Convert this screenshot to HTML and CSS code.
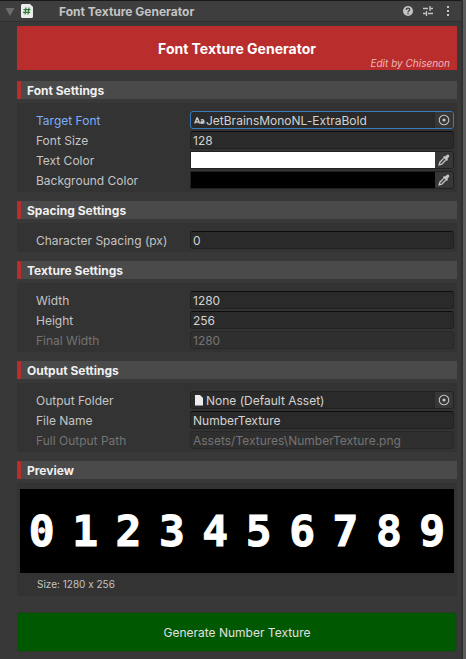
FILE: index.html
```html
<!DOCTYPE html>
<html lang="en">
<head>
<meta charset="utf-8">
<meta name="viewport" content="width=device-width, initial-scale=1">
<title>Font Texture Generator</title>
<link rel="stylesheet" href="styles.css">
</head>
<body>
<svg class="symbols" aria-hidden="true">
  <symbol id="picker" viewBox="0 0 12 12"><circle cx="6" cy="6" r="4.8" fill="none" stroke="#c4c4c4" stroke-width="1.1"/><circle cx="6" cy="6" r="1.6" fill="#c4c4c4"/></symbol>
  <symbol id="dropper" viewBox="0 0 12 12"><path d="M7 2.500 8.700 1.100c.8-.8 1.700-.7 2.200-.1s.5 1.500-.2 2.200L9.500 4.800l.4 1.200L8.800 7.100 4.900 3.200 6 2.100z" fill="#c4c4c4"/><path d="M5.700 4.400 1.900 8.200l-.8 2.700 2.700-.8L7.600 6.300" fill="none" stroke="#c4c4c4" stroke-width="1.300"/></symbol>
</svg>
<main class="inspector">
  <header class="component">
    <button class="icon-button" type="button" aria-label="Collapse"><svg width="10" height="9" viewBox="0 0 10 9"><path d="M0.500 1h9L5 9z" fill="#6c6c6c"/></svg></button>
    <svg class="script-icon" width="12" height="14" viewBox="0 0 12 14"><path d="M1 0h8l3 3v10l-1 1H1l-1-1V1z" fill="#ececec"/><path d="M5 3.500 4 10.500M8 3.500 7 10.500M2.500 5.700h7M2 8.400h7" stroke="#2c7a32" stroke-width="1.200" fill="none"/></svg>
    <h1 class="component-name">Font Texture Generator</h1>
    <div class="tools">
      <button class="icon-button" type="button" aria-label="Help"><svg width="10" height="10" viewBox="0 0 10 10"><circle cx="5" cy="5" r="5" fill="#c4c4c4"/><path d="M3.300 3.900C3.300 1.600 6.700 1.700 6.700 3.700 6.700 4.900 5 4.800 5 6.300M5 7v1.300" fill="none" stroke="#3e3e3e" stroke-width="1.300"/></svg></button>
      <button class="icon-button" type="button" aria-label="Presets"><svg width="10" height="10" viewBox="0 0 10 10"><path d="M0 2.500h5M7 2.500h3M7 0v5M0 7.500h3M5 7.500h5M3.500 5v5" fill="none" stroke="#c4c4c4" stroke-width="1.300"/></svg></button>
      <button class="icon-button" type="button" aria-label="More"><svg width="10" height="10" viewBox="0 0 10 10"><path d="M4 0h2v2H4zM4 4h2v2H4zM4 8h2v2H4z" fill="#c4c4c4"/></svg></button>
    </div>
  </header>

  <div class="content">
    <div class="banner">
      <p class="banner-title">Font Texture Generator</p>
      <p class="banner-credit">Edit by Chisenon</p>
    </div>

    <section>
      <h2 class="heading">Font Settings</h2>
      <div class="panel">
        <div class="row active">
          <label for="font">Target Font</label>
          <div class="field object">
            <svg width="12" height="12" viewBox="0 0 12 12" fill="none" stroke="#c4c4c4" stroke-width="1.500"><path d="M.8 9.500 2.900 4h.6l2.100 5.500M1.700 8h3"/><path d="M6.900 6.200c.8-.7 2.900-.7 2.900.8v2.500M9.800 7.500c-3.500-.2-3.500 1.700-2 1.700 1 0 1.700-.4 2-.9"/></svg>
            <input id="font" type="text" value="JetBrainsMonoNL-ExtraBold" readonly>
            <button class="pick" type="button" aria-label="Select font"><svg width="12" height="12"><use href="#picker"/></svg></button>
          </div>
        </div>
        <div class="row">
          <label for="size">Font Size</label>
          <input class="field text" id="size" type="text" inputmode="numeric" value="128">
        </div>
        <div class="row">
          <label for="fg">Text Color</label>
          <div class="field color">
            <input id="fg" type="color" value="#ffffff">
            <button class="pick" type="button" aria-label="Sample text color"><svg width="12" height="12"><use href="#dropper"/></svg></button>
          </div>
        </div>
        <div class="row">
          <label for="bg">Background Color</label>
          <div class="field color">
            <input id="bg" type="color" value="#000000">
            <button class="pick" type="button" aria-label="Sample background color"><svg width="12" height="12"><use href="#dropper"/></svg></button>
          </div>
        </div>
      </div>
    </section>

    <section>
      <h2 class="heading">Spacing Settings</h2>
      <div class="panel">
        <div class="row">
          <label for="spacing">Character Spacing (px)</label>
          <input class="field text" id="spacing" type="text" inputmode="numeric" value="0">
        </div>
      </div>
    </section>

    <section>
      <h2 class="heading">Texture Settings</h2>
      <div class="panel">
        <div class="row">
          <label for="width">Width</label>
          <input class="field text" id="width" type="text" inputmode="numeric" value="1280">
        </div>
        <div class="row">
          <label for="height">Height</label>
          <input class="field text" id="height" type="text" inputmode="numeric" value="256">
        </div>
        <div class="row disabled">
          <label for="final">Final Width</label>
          <input class="field text" id="final" type="text" value="1280" disabled>
        </div>
      </div>
    </section>

    <section>
      <h2 class="heading">Output Settings</h2>
      <div class="panel">
        <div class="row">
          <label for="folder">Output Folder</label>
          <div class="field object">
            <svg width="12" height="12" viewBox="0 0 12 12"><path d="M1 1h5l3 3v7.500H1z" fill="#ececec"/></svg>
            <input id="folder" type="text" value="None (Default Asset)" readonly>
            <button class="pick" type="button" aria-label="Select folder"><svg width="12" height="12"><use href="#picker"/></svg></button>
          </div>
        </div>
        <div class="row">
          <label for="file">File Name</label>
          <input class="field text" id="file" type="text" value="NumberTexture">
        </div>
        <div class="row disabled">
          <label for="path">Full Output Path</label>
          <input class="field text" id="path" type="text" value="Assets/Textures\NumberTexture.png" disabled>
        </div>
      </div>
    </section>

    <section>
      <h2 class="heading">Preview</h2>
      <div class="preview">
        <div class="texture"><span>0</span><span>1</span><span>2</span><span>3</span><span>4</span><span>5</span><span>6</span><span>7</span><span>8</span><span>9</span></div>
        <p class="dimensions">Size: 1280 x 256</p>
      </div>
    </section>

    <button class="generate" type="button">Generate Number Texture</button>
  </div>
</main>
</body>
</html>
```
FILE: styles.css
```css
* {
  box-sizing: border-box;
}

body {
  margin: 0;
  min-height: 100vh;
  display: flex;
  background: #383838;
  color: #c4c4c4;
  font: 12px/18px Inter, "Liberation Sans", sans-serif;
  font-variant-ligatures: no-contextual;
}

h1,
h2,
p {
  margin: 0;
}

button,
input {
  font: inherit;
  color: inherit;
  margin: 0;
  padding: 0;
  border: 0;
  background: none;
}

svg {
  display: block;
  flex: none;
}

.symbols {
  display: none;
}

.inspector {
  flex: 1;
  min-width: 0;
  border-right: 3px solid #5c5c5c;
  box-shadow: inset -2px 0 #303030;
}

.component {
  display: flex;
  align-items: center;
  height: 22px;
  margin-right: 2px;
  padding: 0 8px 0 5px;
  border-top: 1px solid #191919;
  border-bottom: 1px solid #303030;
  background: #3e3e3e;
}

.script-icon {
  margin-left: 6px;
}

.component-name {
  flex: 1;
  margin-left: 26px;
  padding-top: 2px;
  font-size: 12px;
  font-weight: 700;
  line-height: 18px;
}

.tools {
  display: flex;
  gap: 10px;
}

.content {
  padding: 4px 6px 6px 17px;
}

.banner {
  position: relative;
  height: 44px;
  margin-bottom: 11px;
  background: #b92d2d;
  color: #fff;
  text-align: center;
}

.banner-title {
  font-size: 14px;
  font-weight: 700;
  line-height: 46px;
}

.banner-credit {
  position: absolute;
  right: 7px;
  bottom: 0;
  font-size: 10px;
  font-style: italic;
  line-height: 14px;
  color: #eeb8b8;
}

.heading {
  height: 18px;
  margin-bottom: 4px;
  padding-left: 6px;
  border-left: 4px solid #b92d2d;
  background: #4a4a4a;
  color: #f0f0f0;
  font-size: 12px;
  font-weight: 700;
  line-height: 20px;
}

.panel {
  display: flex;
  flex-direction: column;
  gap: 2px;
  margin-bottom: 9px;
  padding: 8px 3px 3px 19px;
  background: #333;
}

.row {
  display: grid;
  grid-template-columns: 154px 1fr;
  height: 18px;
}

.row label {
  line-height: 20px;
}

.field {
  width: 100%;
  min-width: 0;
  height: 18px;
  border: 1px solid #212121;
  border-radius: 3px;
  background: #2a2a2a;
}

.text {
  padding: 1px 2px 0;
  border-top-color: #0d0d0d;
  color: #d2d2d2;
}

.object,
.color {
  display: flex;
  overflow: hidden;
}

.color {
  border-radius: 0 3px 3px 0;
}

.object {
  align-items: center;
  padding-left: 3px;
  color: #d2d2d2;
}

.object input,
.color input {
  flex: 1;
  min-width: 0;
  height: 16px;
}

.object input {
  padding-top: 1px;
}

.pick {
  display: grid;
  place-items: center;
  width: 18px;
  height: 16px;
  background: #373737;
}

.color input::-webkit-color-swatch-wrapper {
  padding: 0;
}

.color input::-webkit-color-swatch {
  border: 0;
  border-radius: 0;
}

.active label {
  color: #7baefa;
}

.active .field {
  border-color: #3a79bb;
}

.disabled label,
.disabled .field {
  color: #747474;
}

.disabled .field {
  border-color: #282828;
  background: #2f2f2f;
}

.preview {
  margin-bottom: 16px;
  padding: 6px 3px 3px;
  background: #333;
}

.texture {
  display: grid;
  grid-template-columns: repeat(10, 1fr);
  padding-top: 1px;
  background: #000;
  color: #fff;
  font: bold 43px/83px "DejaVu Sans Mono", monospace;
  -webkit-text-stroke: 1px #fff;
  text-align: center;
}

.dimensions {
  padding: 3px 17px 0;
  font-size: 10px;
  line-height: 17px;
}

.generate {
  display: block;
  width: 100%;
  height: 40px;
  padding-top: 2px;
  border: 1px solid #2a3a2a;
  border-radius: 3px;
  background: #005800;
  color: #e0e0e0;
}
```
